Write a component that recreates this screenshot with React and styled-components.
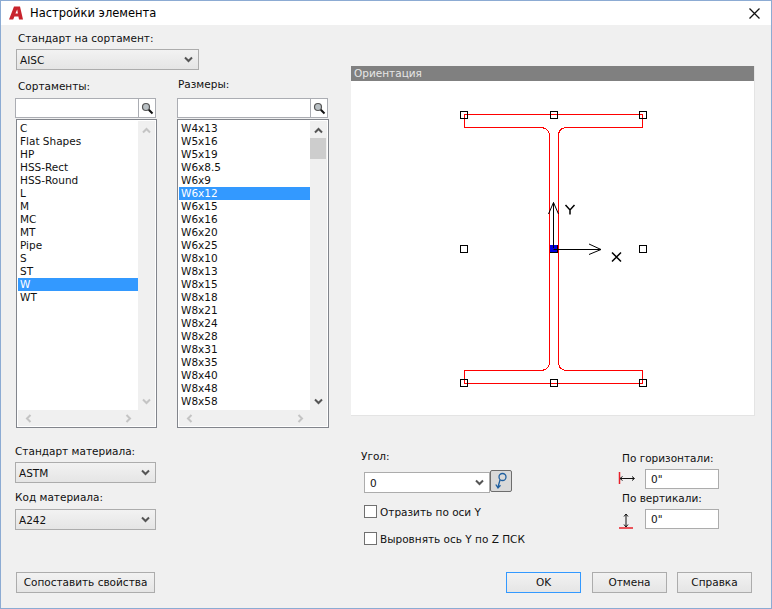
import React from 'react'
import styled, { createGlobalStyle } from 'styled-components'

const GlobalStyle = createGlobalStyle`
  html, body { margin: 0; padding: 0; background: #f0f0f0; }
  * { box-sizing: border-box; }
`

const shapes = ['C', 'Flat Shapes', 'HP', 'HSS-Rect', 'HSS-Round', 'L', 'M', 'MC', 'MT', 'Pipe', 'S', 'ST', 'W', 'WT']
const sizes = ['W4x13', 'W5x16', 'W5x19', 'W6x8.5', 'W6x9', 'W6x12', 'W6x15', 'W6x16', 'W6x20', 'W6x25', 'W8x10', 'W8x13', 'W8x15', 'W8x18', 'W8x21', 'W8x24', 'W8x28', 'W8x31', 'W8x35', 'W8x40', 'W8x48', 'W8x58']

const Dialog = styled.div`
  width: 772px;
  height: 609px;
  border: 1px solid #8cabd3;
  background: #f0f0f0;
  display: flex;
  flex-direction: column;
  font-family: "DejaVu Sans", sans-serif;
  font-size: 10.5px;
  color: #111;
  overflow: hidden;
`

const TitleBar = styled.div`
  height: 24px;
  background: #fff;
  display: flex;
  align-items: center;
  padding: 0 11px 0 7px;
  flex-shrink: 0;
`

const TitleText = styled.span`
  font-size: 11.5px;
  margin-left: 6px;
  flex: 1;
  color: #000;
`

const Main = styled.div`
  display: flex;
  padding: 7px 16px 0 14px;
`

const LeftColumn = styled.div`
  width: 336px;
  flex-shrink: 0;
  display: flex;
  flex-direction: column;
`

const Label = styled.div`
  height: 13px;
  line-height: 13px;
  white-space: nowrap;
  margin-left: ${p => p.$left || 0}px;
  margin-top: ${p => p.$top || 0}px;
  margin-bottom: ${p => p.$bottom || 0}px;
`

const Dropdown = styled.div`
  width: ${p => p.$width}px;
  height: 21px;
  margin-left: ${p => p.$left || 0}px;
  border: 1px solid #acacac;
  background: linear-gradient(#f2f2f2, #e5e5e5);
  display: flex;
  align-items: center;
  justify-content: space-between;
  padding: 0 5px 0 3px;
`

const ListsRow = styled.div`
  display: flex;
  margin-top: 8px;
`

const ListColumn = styled.div`
  width: ${p => p.$width}px;
  margin-right: ${p => p.$gap || 0}px;
`

const ListLabel = styled(Label)`
  height: 20px;
  padding-top: ${p => p.$pad}px;
  margin-left: 3px;
  margin-left: ${p => p.$left}px;
`

const SearchBox = styled.div`
  width: ${p => p.$width}px;
  height: 20px;
  display: flex;
  background: #fff;
  border: 1px solid #abadb3;
`

const SearchField = styled.div`
  flex: 1;
  border-right: 1px solid #abadb3;
`

const SearchButton = styled.div`
  width: 16px;
  display: flex;
  align-items: center;
  justify-content: center;
`

const ListBox = styled.div`
  height: 309px;
  width: ${p => p.$width}px;
  margin-top: 1px;
  margin-left: ${p => p.$left || 0}px;
  border: 1px solid #82858c;
  padding: 1px;
  display: grid;
  grid-template-columns: 1fr 17px;
  grid-template-rows: 1fr 16px;
  background: #fff;
`

const ListItems = styled.div`
  overflow: hidden;
  padding-top: 1px;
`

const ListItem = styled.div`
  height: 13px;
  line-height: 13px;
  padding-left: 2px;
  background: ${p => (p.$selected ? '#3399ff' : 'transparent')};
  color: ${p => (p.$selected ? '#fff' : '#111')};
`

const VTrack = styled.div`
  background: #f0f0f0;
  display: flex;
  flex-direction: column;
  align-items: center;
  justify-content: space-between;
  padding: 6px 0 5px;
  position: relative;
`

const Thumb = styled.div`
  position: absolute;
  left: 0;
  top: 17px;
  width: 16px;
  height: 21px;
  background: #cdcdcd;
`

const HTrack = styled.div`
  grid-column: 1 / 3;
  background: #f0f0f0;
  display: flex;
  align-items: center;
  justify-content: space-between;
  padding: 0 22px 0 6px;
`

const RightColumn = styled.div`
  flex: 1;
  padding-top: 34px;
`

const Panel = styled.div`
  width: 404px;
  background: #fff;
  border-right: 1px solid #e4e4e4;
  border-bottom: 1px solid #e4e4e4;
`

const PanelHeader = styled.div`
  height: 15px;
  line-height: 15px;
  padding-left: 3px;
  background: #808080;
  color: #e6e6e6;
`

const Canvas = styled.svg`
  display: block;
  width: 404px;
  height: 334px;
`

const Controls = styled.div`
  display: flex;
  width: 404px;
  padding-left: 10px;
`

const AngleColumn = styled.div`
  flex: 1;
  padding-top: 34px;
`

const AngleRow = styled.div`
  display: flex;
  align-items: flex-start;
  margin-left: 3px;
  margin-top: 7px;
`

const Combo = styled.div`
  width: 126px;
  height: 21px;
  margin-top: 2px;
  background: #fff;
  border: 1px solid #acacac;
  display: flex;
  align-items: center;
  justify-content: space-between;
  padding: 0 5px 0 5px;
`

const PickButton = styled.div`
  width: 22px;
  height: 22px;
  background: #d9d9d9;
  border: 1px solid #6d6d6d;
  border-radius: 2px;
  display: flex;
  align-items: center;
  justify-content: center;
`

const CheckRow = styled.div`
  display: flex;
  align-items: center;
  height: 13px;
  margin-left: 3px;
  margin-top: ${p => p.$top}px;
`

const CheckBox = styled.div`
  width: 13px;
  height: 13px;
  background: #fff;
  border: 1px solid #707070;
  margin-right: 3px;
`

const OffsetColumn = styled.div`
  width: 137px;
  padding-top: 36px;
`

const OffsetRow = styled.div`
  display: flex;
  align-items: center;
  margin-top: 4px;
  margin-bottom: 3px;
`

const OffsetIcon = styled.svg`
  width: 27px;
  height: 20px;
  flex-shrink: 0;
`

const OffsetInput = styled.div`
  width: 74px;
  height: 20px;
  line-height: 18px;
  background: #fff;
  border: 1px solid #acacac;
  padding-left: 5px;
`

const Footer = styled.div`
  display: flex;
  justify-content: space-between;
  margin-top: auto;
  padding: 0 19px 15px 15px;
`

const FooterGroup = styled.div`
  display: flex;
`

const Button = styled.div`
  width: ${p => p.$width || 75}px;
  height: 21px;
  line-height: 19px;
  margin-left: ${p => p.$left || 0}px;
  text-align: center;
  background: linear-gradient(#f2f2f2, #e5e5e5);
  border: 1px solid ${p => (p.$primary ? '#3399ff' : '#acacac')};
`

const Chevron = ({ dir = 'down', color = '#555' }) => {
  const rotate = { down: 0, up: 180, left: 90, right: -90 }[dir]
  return (
    <svg width="9" height="7" viewBox="0 0 9 7" style={{ transform: `rotate(${rotate}deg)` }}>
      <path d="M1 1.5 L4.5 5 L8 1.5" fill="none" stroke={color} strokeWidth="2" />
    </svg>
  )
}

const SearchIcon = () => (
  <svg width="13" height="13" viewBox="0 0 13 13">
    <circle cx="5" cy="5" r="3.5" fill="#b9c0c4" stroke="#555" strokeWidth="1.2" />
    <path d="M7.8 7.8 L11.5 11.5" stroke="#111" strokeWidth="2" />
  </svg>
)

const AppIcon = () => (
  <svg width="16" height="16" viewBox="0 0 16 16">
    <path d="M1 14.5 L6 1.5 L12 1.5 L15 14.5 L11 14.5 L10.4 11.5 L6.4 11.5 L5.2 14.5 Z M7.4 8.6 L9.9 8.6 L9.2 4.6 Z" fill="#c8232c" fillRule="evenodd" />
  </svg>
)

const CloseIcon = () => (
  <svg width="11" height="11" viewBox="0 0 11 11">
    <path d="M0.5 0.5 L10.5 10.5 M10.5 0.5 L0.5 10.5" stroke="#111" strokeWidth="1.3" />
  </svg>
)

const PickIcon = () => (
  <svg width="14" height="18" viewBox="0 0 14 18">
    <circle cx="8.5" cy="5" r="3.5" fill="none" stroke="#1f5f9f" strokeWidth="1.3" />
    <path d="M6 8 L4 15 M1.8 12.5 L4 16 L6.5 13.2" fill="none" stroke="#1f5f9f" strokeWidth="1.3" />
  </svg>
)

const Handle = ({ x, y }) => <rect x={x - 3.5} y={y - 3.5} width="7" height="7" fill="none" stroke="#000" />

const ListPanel = ({ items, selected, width, left, thumb, enabled }) => {
  const arrow = enabled ? '#555' : '#c4c4c4'
  return (
    <ListBox $width={width} $left={left}>
      <ListItems>
        {items.map(item => (
          <ListItem key={item} $selected={item === selected}>{item}</ListItem>
        ))}
      </ListItems>
      <VTrack>
        <Chevron dir="up" color={arrow} />
        {thumb && <Thumb />}
        <Chevron dir="down" color={arrow} />
      </VTrack>
      <HTrack>
        <Chevron dir="left" color="#c4c4c4" />
        <Chevron dir="right" color="#c4c4c4" />
      </HTrack>
    </ListBox>
  )
}

const App = () => {
  return (
    <>
      <GlobalStyle />
      <Dialog>
        <TitleBar>
          <AppIcon />
          <TitleText>Настройки элемента</TitleText>
          <CloseIcon />
        </TitleBar>
        <Main>
          <LeftColumn>
            <Label $left={3} $bottom={4}>Стандарт на сортамент:</Label>
            <Dropdown $width={183} $left={1}>AISC<Chevron /></Dropdown>
            <ListsRow>
              <ListColumn $width={162}>
                <ListLabel $left={3} $pad={2}>Сортаменты:</ListLabel>
                <SearchBox $width={141}>
                  <SearchField />
                  <SearchButton><SearchIcon /></SearchButton>
                </SearchBox>
                <ListPanel items={shapes} selected="W" width={141} left={1} />
              </ListColumn>
              <ListColumn $width={152}>
                <ListLabel $left={1} $pad={0}>Размеры:</ListLabel>
                <SearchBox $width={151}>
                  <SearchField />
                  <SearchButton><SearchIcon /></SearchButton>
                </SearchBox>
                <ListPanel items={sizes} selected="W6x12" width={152} thumb enabled />
              </ListColumn>
            </ListsRow>
            <Label $top={17} $bottom={4}>Стандарт материала:</Label>
            <Dropdown $width={141}>ASTM<Chevron /></Dropdown>
            <Label $top={8} $bottom={5}>Код материала:</Label>
            <Dropdown $width={141}>A242<Chevron /></Dropdown>
          </LeftColumn>
          <RightColumn>
            <Panel>
              <PanelHeader>Ориентация</PanelHeader>
              <Canvas viewBox="351 81 404 334" shapeRendering="crispEdges">
                <path
                  d="M464.5 114.5 H642.5 V127.5 H565 Q558.5 129 558.5 136 V362 Q558.5 369 565 370.5 H642.5 V383.5 H464.5 V370.5 H542 Q549.5 369 549.5 362 V136 Q549.5 129 542 127.5 H464.5 Z"
                  fill="none"
                  stroke="#ff0000"
                  strokeWidth="1"
                />
                <Handle x={464} y={115} />
                <Handle x={553.5} y={115} />
                <Handle x={643} y={115} />
                <Handle x={464} y={248.5} />
                <Handle x={643} y={248.5} />
                <Handle x={464} y={383} />
                <Handle x={553.5} y={383} />
                <Handle x={643} y={383} />
                <Handle x={553.5} y={248.5} />
                <rect x="550" y="245" width="7" height="7" fill="#0000e0" />
                <path d="M553.5 248 V202.5 M548.5 214 L553.5 202.5 L558.5 214" fill="none" stroke="#000" shapeRendering="auto" />
                <path d="M553.5 249.5 H601 M589 244 L601 249.5 L589 254.5" fill="none" stroke="#000" shapeRendering="auto" />
                <path d="M565.5 205 L570 210 L574.5 205 M570 210 V214.5" fill="none" stroke="#000" strokeWidth="1.5" shapeRendering="auto" />
                <path d="M612 252.5 L621 261.5 M621 252.5 L612 261.5" fill="none" stroke="#000" strokeWidth="1.5" shapeRendering="auto" />
              </Canvas>
            </Panel>
            <Controls>
              <AngleColumn>
                <Label>Угол:</Label>
                <AngleRow>
                  <Combo>0<Chevron /></Combo>
                  <PickButton><PickIcon /></PickButton>
                </AngleRow>
                <CheckRow $top={12}><CheckBox />Отразить по оси Y</CheckRow>
                <CheckRow $top={14}><CheckBox />Выровнять ось Y по Z ПСК</CheckRow>
              </AngleColumn>
              <OffsetColumn>
                <Label $left={4}>По горизонтали:</Label>
                <OffsetRow>
                  <OffsetIcon viewBox="0 0 27 20">
                    <path d="M1.5 3 V15" stroke="#e8202a" strokeWidth="1.5" />
                    <path d="M2 9.5 H16 M4.5 7.5 L2 9.5 L4.5 11.5 M14 7.5 L16.5 9.5 L14 11.5" fill="none" stroke="#111" />
                  </OffsetIcon>
                  <OffsetInput>0"</OffsetInput>
                </OffsetRow>
                <Label $left={4}>По вертикали:</Label>
                <OffsetRow>
                  <OffsetIcon viewBox="0 0 27 20">
                    <path d="M1 19 H15" stroke="#e8202a" strokeWidth="1.5" />
                    <path d="M8 5 V18 M6 7.5 L8 5 L10 7.5 M6 15.5 L8 18 L10 15.5" fill="none" stroke="#111" />
                  </OffsetIcon>
                  <OffsetInput>0"</OffsetInput>
                </OffsetRow>
              </OffsetColumn>
            </Controls>
          </RightColumn>
        </Main>
        <Footer>
          <Button $width={139} $left={0}>Сопоставить свойства</Button>
          <FooterGroup>
            <Button $primary>OK</Button>
            <Button $left={11}>Отмена</Button>
            <Button $left={10}>Справка</Button>
          </FooterGroup>
        </Footer>
      </Dialog>
    </>
  )
}

export default App
